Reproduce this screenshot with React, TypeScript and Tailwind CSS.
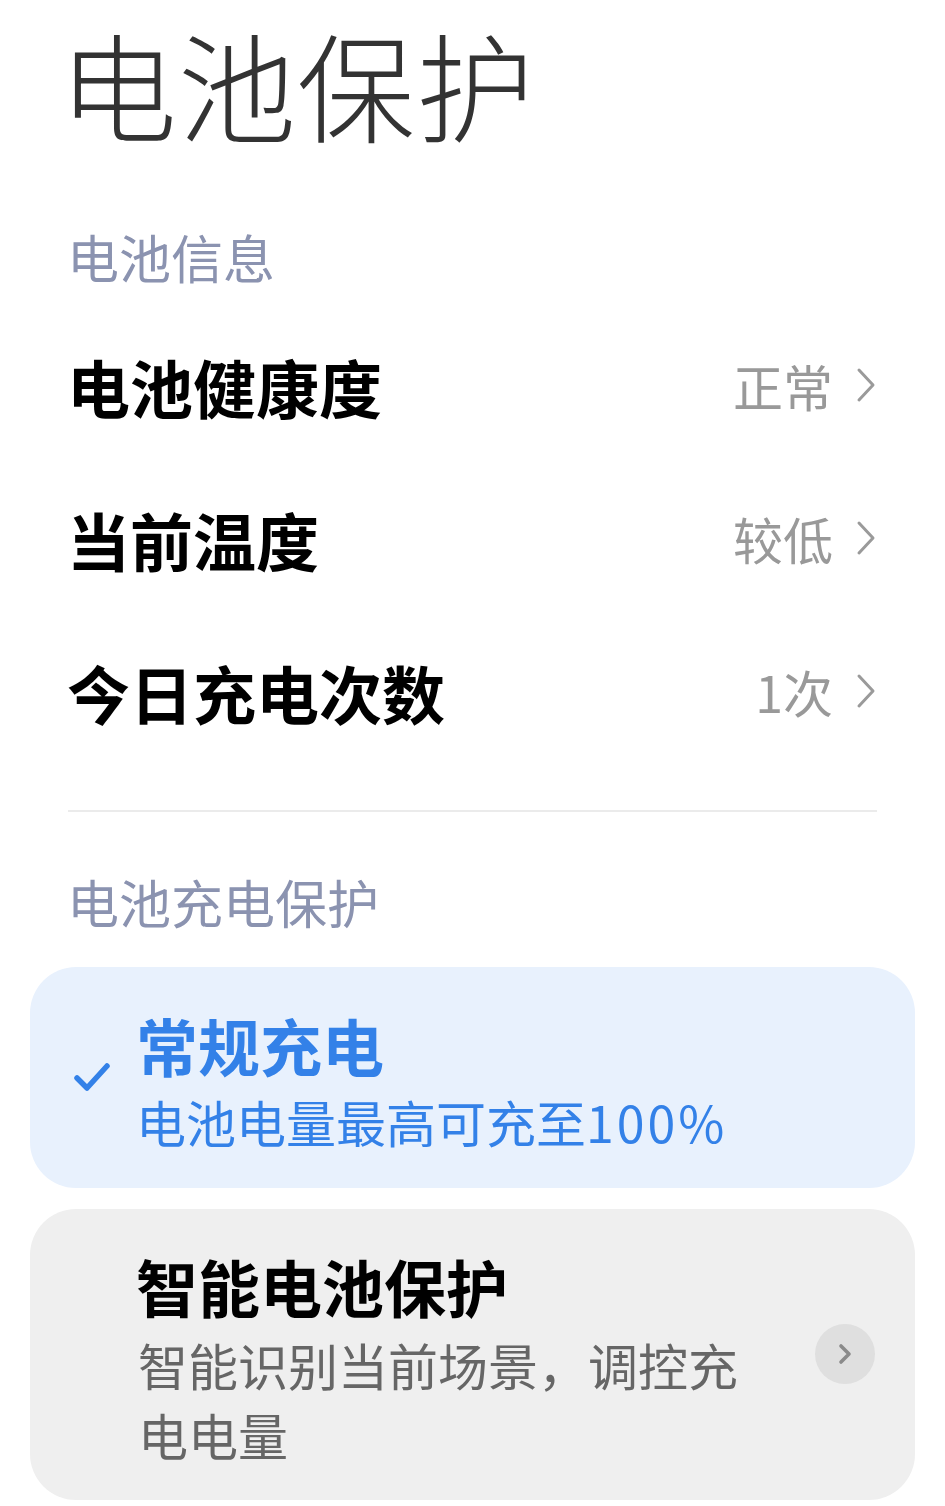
import React from "react";

const font = { fontFamily: '"Noto Sans CJK SC", "Noto Sans", sans-serif' };

const Chevron = () => (
  <svg width="22" height="36" viewBox="0 0 22 36" fill="none" className="shrink-0">
    <path d="M4 3 L18 18 L4 33" stroke="#9a9a9a" strokeWidth="3" strokeLinecap="round" strokeLinejoin="round" />
  </svg>
);

const InfoRow = ({ label, value }: { label: string; value: string }) => (
  <div className="flex h-[153px] items-center justify-between">
    <span className="-ml-[4px] text-[63px] font-bold leading-none text-black">{label}</span>
    <div className="flex items-center gap-[22px]">
      <span className="text-[50px] leading-none text-[#999999]">{value}</span>
      <Chevron />
    </div>
  </div>
);

export default function App() {
  return (
    <div className="min-h-screen w-full overflow-hidden bg-white" style={font}>
      <h1 className="pl-[59px] pt-[9px] text-[118px] font-light leading-[1.25] tracking-[1px] text-[#333333]">电池保护</h1>
      <div className="pl-[71px] pr-[68px]">
        <div className="-ml-[4px] mt-[74px] text-[52px] leading-none text-[#8b93b0]">电池信息</div>
        <div className="mt-[26px]">
          <InfoRow label="电池健康度" value="正常" />
          <InfoRow label="当前温度" value="较低" />
          <InfoRow label="今日充电次数" value="1次" />
        </div>
        <div className="-ml-[3px] mt-[42px] h-[2px] bg-[#ebebeb]" />
        <div className="-ml-[4px] mt-[64px] text-[52px] leading-none text-[#8b93b0]">电池充电保护</div>
      </div>

      <div className="mx-[30px] mt-[39px] flex flex-col gap-[21px]">
        {/* selected option */}
        <div className="flex h-[221px] items-start rounded-[46px] bg-[#e8f1fd]">
          <div className="flex h-full w-[110px] items-center justify-center pl-[14px]">
            <svg width="40" height="34" viewBox="0 0 40 34" fill="none">
              <path d="M5 18 L15 28 L35 6" stroke="#3381e8" strokeWidth="5.5" strokeLinecap="round" strokeLinejoin="round" />
            </svg>
          </div>
          <div className="flex flex-col pt-[47px]">
            <span className="-ml-[4px] text-[62px] font-bold leading-none text-[#3381e8]">常规充电</span>
            <span className="-ml-[4px] mt-[20px] text-[50px] leading-none text-[#3381e8]">
              电池电量最高可充至<span className="tracking-[3px]">100%</span>
            </span>
          </div>
        </div>

        {/* smart protection option */}
        <div className="flex h-[291px] items-start rounded-[46px] bg-[#efefef] pl-[110px] pr-[40px]">
          <div className="flex flex-1 flex-col pt-[46px]">
            <span className="-ml-[4px] text-[62px] font-bold leading-none text-black">智能电池保护</span>
            <span className="-ml-[2px] mt-[12px] max-w-[620px] text-[50px] leading-[70px] text-[#666666]">
              智能识别当前场景，调控充电电量
            </span>
          </div>
          <div className="mt-[115px] flex h-[60px] w-[60px] items-center justify-center rounded-full bg-[#dfdfdf]">
            <svg width="14" height="22" viewBox="0 0 14 22" fill="none">
              <path d="M3 3 L11 11 L3 19" stroke="#8a8a8a" strokeWidth="3.6" strokeLinecap="round" strokeLinejoin="round" />
            </svg>
          </div>
        </div>
      </div>
    </div>
  );
}
